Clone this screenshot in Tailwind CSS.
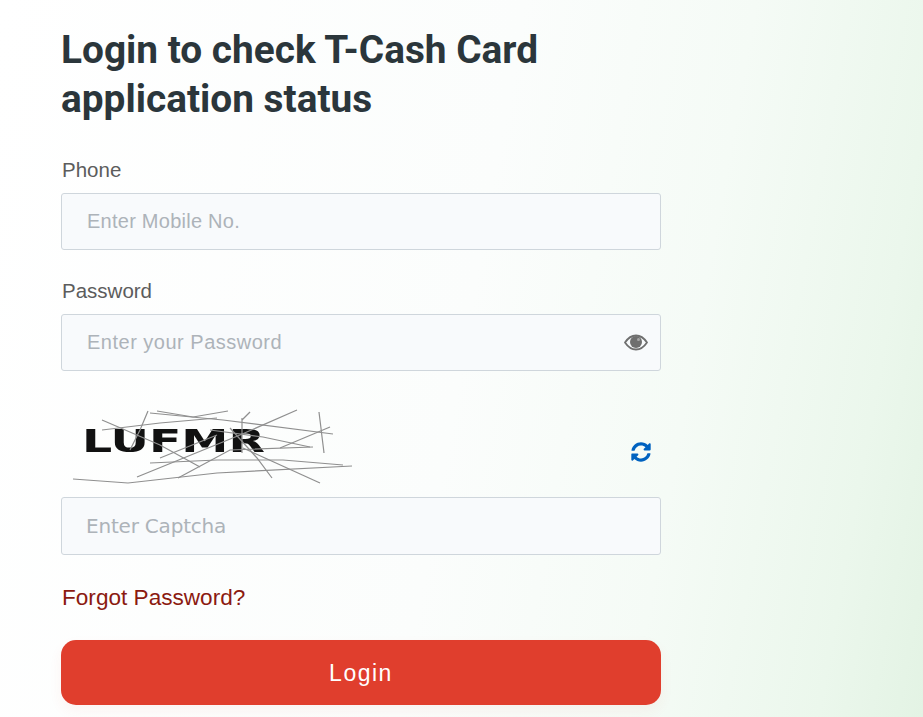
<!DOCTYPE html>
<html lang="en">
<head>
    <meta charset="UTF-8" />
    <meta name="viewport" content="width=device-width, initial-scale=1.0">
    <title>Login</title>
    <script src="https://cdn.jsdelivr.net/npm/@tailwindcss/browser@4"></script>
</head>
<body class="h-[717px] overflow-hidden font-['Liberation_Sans',sans-serif] bg-[linear-gradient(100deg,#ffffff_0%,#fbfdfc_50%,#f5fbf6_72%,#ebf7ec_90%,#e3f3e4_100%)]">
    <div class="w-[600px] ml-[61px] pt-[25px]">
        <h1 class="font-['Roboto',sans-serif] text-[38.800px] leading-[49px] font-bold text-[#2b363b]">Login to check T-Cash Card application status</h1>

        <form class="mt-[32px]">
            <!-- phone -->
            <label class="block pl-[1px] text-[20.500px] leading-[30px] text-[#5c5c5c]">Phone</label>
            <input type="text" placeholder="Enter Mobile No." class="mt-[8px] block w-full h-[57px] px-[25px] text-[20px] tracking-[0.25px] bg-[#f8fafc] border border-[#cfd6dc] rounded-[3px] placeholder:text-[#adb3b9]" />

            <!-- password -->
            <label class="block mt-[26px] pl-[1px] text-[20.500px] leading-[30px] text-[#5c5c5c]">Password</label>
            <div class="relative mt-[8px]">
                <input type="password" placeholder="Enter your Password" class="block w-full h-[57px] px-[25px] text-[20px] tracking-[0.5px] bg-[#f8fafc] border border-[#cfd6dc] rounded-[3px] placeholder:text-[#adb3b9]" />
                <svg class="absolute right-[13px] top-[20px]" width="24" height="17" viewBox="0 0 24 17">
                    <path d="M1 8.500C4 4 7.500 1.500 12 1.500S20 4 23 8.500C20 13 16.500 15.500 12 15.500S4 13 1 8.500Z" fill="none" stroke="#6f6f6f" stroke-width="1.800" />
                    <circle cx="12" cy="8" r="6" fill="#6f6f6f" />
                    <circle cx="14.500" cy="5.500" r="1.500" fill="#a8a8a8" />
                </svg>
            </div>

            <!-- captcha -->
            <div class="flex items-center justify-between mt-[34px] h-[82px]">
                <svg class="ml-[11px] blur-[0.5px]" width="284" height="82" viewBox="0 0 284 82">
                    <text x="10" y="47" font-family="DejaVu Sans" font-weight="700" font-size="32" textLength="183" lengthAdjust="spacingAndGlyphs" fill="#111111">LUFMR</text>
                    <g stroke="#8f8f8f" stroke-width="1.200" fill="none">
                        <path d="M1 74L56 78L145 68L280 61" />
                        <path d="M65 72L168 30L225 5" />
                        <path d="M78 8L151 15L261 29" />
                        <path d="M85 6L121 12L156 6" />
                        <path d="M30 15L88 40L128 62" />
                        <path d="M76 6L68 25L58 45" />
                        <path d="M30 25L88 18L145 13" />
                        <path d="M78 58L145 55L211 55L271 60" />
                        <path d="M106 73L158 45L241 42" />
                        <path d="M158 23L185 53L200 73" />
                        <path d="M170 13L170 48" />
                        <path d="M178 7L170 15" />
                        <path d="M138 25L191 32L238 42" />
                        <path d="M171 43L248 78" />
                        <path d="M208 43L258 22" />
                        <path d="M247 7L252 48" />
                        <path d="M145 30L88 53" />
                    </g>
                </svg>
                <svg class="mr-[10px] mt-[12px]" width="20" height="20" viewBox="0 0 512 512">
                    <path fill="#0062c0" d="M370.700 133.300C339.500 104 298.900 88 255.800 88c-77.500.1-144.300 53.200-162.800 126.900-1.300 5.400-6.100 9.200-11.700 9.200H24.100c-7.500 0-13.200-6.800-11.800-14.200C33.900 94.900 134.800 8 256 8c66.400 0 126.800 26.100 171.300 68.700L463 41C478.100 25.900 504 36.600 504 57.900V192c0 13.300-10.700 24-24 24H345.900c-21.400 0-32.100-25.900-17-41l41.800-41.700zM32 296h134.100c21.400 0 32.100 25.900 17 41l-41.800 41.800c31.300 29.300 71.800 45.300 114.900 45.200 77.400-.1 144.300-53.100 162.800-126.800 1.300-5.400 6.100-9.200 11.700-9.200h57.300c7.500 0 13.200 6.800 11.800 14.200C478.100 417.100 377.200 504 256 504c-66.400 0-126.800-26.100-171.300-68.700L49 471C33.900 486.100 8 475.400 8 454.100V320c0-13.300 10.700-24 24-24z" />
                </svg>
            </div>
            <input type="text" placeholder="Enter Captcha" class="mt-[10px] block w-full h-[58px] px-[24px] text-[20px] tracking-[-0.2px] font-['DejaVu_Sans',sans-serif] bg-[#f8fafc] border border-[#cfd6dc] rounded-[3px] placeholder:text-[#adb3b9]" />

            <a class="block mt-[28px] pl-[1px] text-[22.600px] leading-[30px] text-[#8b1a10]">Forgot Password?</a>

            <button type="button" class="block mt-[27px] w-full h-[65px] pt-[2px] rounded-[15px] bg-[#e03e2d] text-white text-[23px] tracking-[1.500px] shadow-[0_6px_14px_rgba(224,62,45,0.06)]">Login</button>
        </form>
    </div>
</body>
</html>
